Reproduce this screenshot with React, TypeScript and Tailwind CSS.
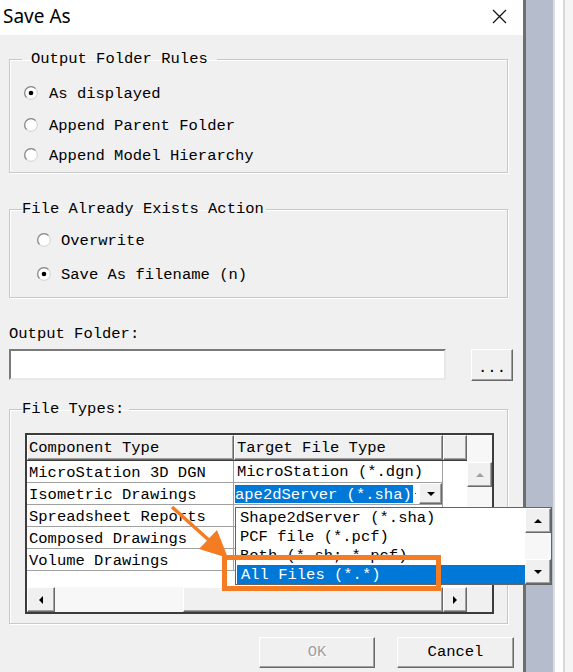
import React from 'react'

// classic Win32 bevels
const raised =
  'bg-[#f0f0f0] border border-t-white border-l-white border-r-[#696969] border-b-[#696969] shadow-[inset_-1px_-1px_0_#a0a0a0]'
const sunken =
  'bg-white border-2 border-t-[#7a7a7a] border-l-[#7a7a7a] border-r-[#e8e8e8] border-b-[#e8e8e8]'
const track = 'bg-[#f7f7f7]'

function Radio({ checked }: { checked?: boolean }) {
  return (
    <svg width="14" height="14" viewBox="0 0 14 14" className="shrink-0">
      <circle cx="7" cy="7" r="6.3" fill="#fff" stroke="#cfcfcf" />
      <path d="M2.5 11.5 A6.3 6.3 0 0 1 11.5 2.5" fill="none" stroke="#8a8a8a" strokeWidth="1.2" />
      {checked && <circle cx="7" cy="7" r="2.3" fill="#000" />}
    </svg>
  )
}

function Arrow({ dir, color = '#000' }: { dir: 'up' | 'down' | 'left' | 'right'; color?: string }) {
  const pts = {
    up: '0,4 4,0 8,4',
    down: '0,0 8,0 4,4',
    left: '4,0 4,8 0,4',
    right: '0,0 0,8 4,4',
  }[dir]
  const vertical = dir === 'up' || dir === 'down'
  return (
    <svg width={vertical ? 8 : 4} height={vertical ? 4 : 8} viewBox={vertical ? '0 0 8 4' : '0 0 4 8'}>
      <polygon points={pts} fill={color} />
    </svg>
  )
}

function Group({
  title,
  legend,
  className,
  children,
}: {
  title: string
  legend: string
  className: string
  children: React.ReactNode
}) {
  return (
    <fieldset
      className={`w-[499px] border border-[#c8c8c8] shadow-[inset_1px_1px_0_#fff,1px_1px_0_#fff] ${className}`}
    >
      <legend className={`leading-[18px] ${legend}`}>{title}</legend>
      {children}
    </fieldset>
  )
}

function Option({ checked, label, gap }: { checked?: boolean; label: string; gap: string }) {
  return (
    <div className={`flex h-full items-center ${gap}`}>
      <Radio checked={checked} />
      <span className="translate-y-[2px]">{label}</span>
    </div>
  )
}

const components = [
  'MicroStation 3D DGN',
  'Isometric Drawings',
  'Spreadsheet Reports',
  'Composed Drawings',
  'Volume Drawings',
]

const fileTypes = ['Shape2dServer (*.sha)', 'PCF file (*.pcf)', 'Both (*.sh; *.pcf)', 'All Files (*.*)']

function TypesGrid() {
  return (
    <div className="relative ml-[15px] mt-[15px] h-[181px] w-[469px] border-2 border-[#3c3c3c]">
      <div className="grid h-full w-full grid-cols-[440px_25px] grid-rows-[152px_25px]">
        <div className="flex flex-col bg-white">
          <div className="flex h-[26px] border-b border-[#3c3c3c]">
            <div className={`${raised} w-[207px] pl-[1px] leading-[24px]`}>Component Type</div>
            <div className={`${raised} w-[209px] pl-[2px] leading-[24px]`}>Target File Type</div>
            <div className={`${raised} w-[24px]`} />
          </div>
          {components.map((name, i) => (
            <div key={name} className="flex h-[22px]">
              <div className="w-[207px] border-b border-r border-[#a0a0a0] pl-[2px] pt-[2px] leading-[21px]">{name}</div>
              <div className="flex w-[209px] items-center border-b border-r border-[#a0a0a0] pl-[1px]">
                {i === 0 && <span className="pl-[2px] pt-[2px] leading-[21px]">MicroStation (*.dgn)</span>}
                {i === 1 && (
                  <>
                    <span className="h-[18px] w-[178px] overflow-hidden whitespace-nowrap bg-[#0078d7] pt-[1px] leading-[18px] text-white">
                      ape2dServer (*.sha)
                    </span>
                    <span className="ml-[2px] h-[1px] w-[1px] bg-[#444]" />
                    <span className={`${raised} ml-auto flex h-[21px] w-[23px] items-center justify-center`}>
                      <Arrow dir="down" />
                    </span>
                  </>
                )}
              </div>
              <div className="w-[24px]" />
            </div>
          ))}
        </div>

        {/* vertical scrollbar */}
        <div className={`${track} flex flex-col pt-[27px]`}>
          <div className={`${raised} flex h-[25px] items-center justify-center`}>
            <Arrow dir="up" color="#a0a0a0" />
          </div>
        </div>

        {/* horizontal scrollbar */}
        <div className="flex">
          <div className={`${raised} flex w-[28px] items-center justify-center`}>
            <Arrow dir="left" />
          </div>
          <div className={`${track} w-[128px]`} />
          <div className={`${raised} w-[260px]`} />
          <div className={`${raised} flex w-[24px] items-center justify-center`}>
            <Arrow dir="right" />
          </div>
        </div>
        <div className="bg-[#f0f0f0]" />
      </div>

      {/* open drop-down list */}
      <div className="absolute left-[208px] top-[72px] z-10 flex h-[78px] w-[317px] border border-[#646464] bg-white">
        <div className="flex w-[289px] flex-col">
          {fileTypes.map((t, i) => (
            <div
              key={t}
              className={`h-[19px] pl-[4px] pt-[1px] leading-[19px] ${i === 3 ? 'ml-[1px] bg-[#0078d7] text-white' : ''}`}
            >
              {t}
            </div>
          ))}
        </div>
        <div className={`${track} flex flex-1 flex-col justify-between`}>
          <div className={`${raised} flex h-[25px] items-center justify-center`}>
            <Arrow dir="up" />
          </div>
          <div className={`${raised} flex h-[25px] items-center justify-center`}>
            <Arrow dir="down" />
          </div>
        </div>
      </div>

      {/* callout */}
      <div className="absolute left-[195px] top-[120px] z-20 h-[36px] w-[219px] border-[5px] border-[#f47c22]" />
      <svg className="pointer-events-none absolute left-0 top-0 z-20 overflow-visible" width="300" height="160">
        <line x1="145" y1="72" x2="184" y2="107" stroke="#f47c22" strokeWidth="3.5" />
        <polygon points="201,123 172,114 190,95" fill="#f47c22" />
      </svg>
    </div>
  )
}

export default function App() {
  return (
    <div className="flex h-[672px] w-[573px] bg-[#f0f0f0] font-['Liberation_Mono',monospace] text-[15.5px] text-black">
      <div className="flex w-[523px] shrink-0 flex-col">
        <div className="flex h-[35px] shrink-0 items-center justify-between bg-white pb-[3px] pl-[3px] pr-[16px]">
          <span className="font-['Segoe_UI','Noto_Sans',sans-serif] text-[19px] leading-none">Save As</span>
          <svg width="15" height="15" viewBox="0 0 15 15">
            <path d="M1 1 L14 14 M14 1 L1 14" stroke="#111" strokeWidth="1.2" />
          </svg>
        </div>

        <div className="flex flex-1 flex-col pl-[9px] pt-[15px]">
          <Group title="Output Folder Rules" legend="ml-[12px] px-[9px]" className="h-[123px]">
            <div className="flex flex-col pl-[14px] pt-[9px]">
              <div className="h-[32px]">
                <Option checked label="As displayed" gap="gap-[11px]" />
              </div>
              <div className="h-[32px]">
                <Option label="Append Parent Folder" gap="gap-[11px]" />
              </div>
              <div className="h-[28px]">
                <Option label="Append Model Hierarchy" gap="gap-[11px]" />
              </div>
            </div>
          </Group>

          <Group title="File Already Exists Action" legend="ml-[12px] pr-[2px]" className="mt-[27px] h-[98px]">
            <div className="flex flex-col pl-[27px] pt-[5px]">
              <div className="h-[34px]">
                <Option label="Overwrite" gap="gap-[10px]" />
              </div>
              <div className="h-[34px]">
                <Option checked label="Save As filename (n)" gap="gap-[10px]" />
              </div>
            </div>
          </Group>

          <div className="mt-[26px] pt-[1px] leading-[18px]">Output Folder:</div>
          <div className="mt-[6px] flex items-start">
            <div className={`${sunken} h-[31px] w-[437px]`} />
            <button className={`${raised} ml-[25px] h-[32px] w-[42px] pt-[5px] leading-[18px]`}>...</button>
          </div>

          <Group title="File Types:" legend="ml-[12px] pr-[5px]" className="mt-[19px] h-[224px]">
            <TypesGrid />
          </Group>

          <div className="mt-[13px] flex gap-[22px] pl-[250px]">
            <button className={`${raised} h-[31px] w-[116px] text-[#a0a0a0] [text-shadow:1px_1px_0_#fff]`}>OK</button>
            <button className={`${raised} h-[31px] w-[117px]`}>Cancel</button>
          </div>
        </div>
      </div>

      {/* neighbouring window edge */}
      <div className="w-[3px] shrink-0 bg-[#6e6e6e]" />
      <div className="w-[27px] shrink-0 bg-[#b5bccb]" />
      <div className="w-[2px] shrink-0 bg-[#dcdcdc]" />
      <div className="w-[8px] shrink-0 bg-white" />
      <div className="w-[2px] shrink-0 bg-[#d8d8d8]" />
      <div className="flex-1 bg-[#f5f5f5]" />
    </div>
  )
}
